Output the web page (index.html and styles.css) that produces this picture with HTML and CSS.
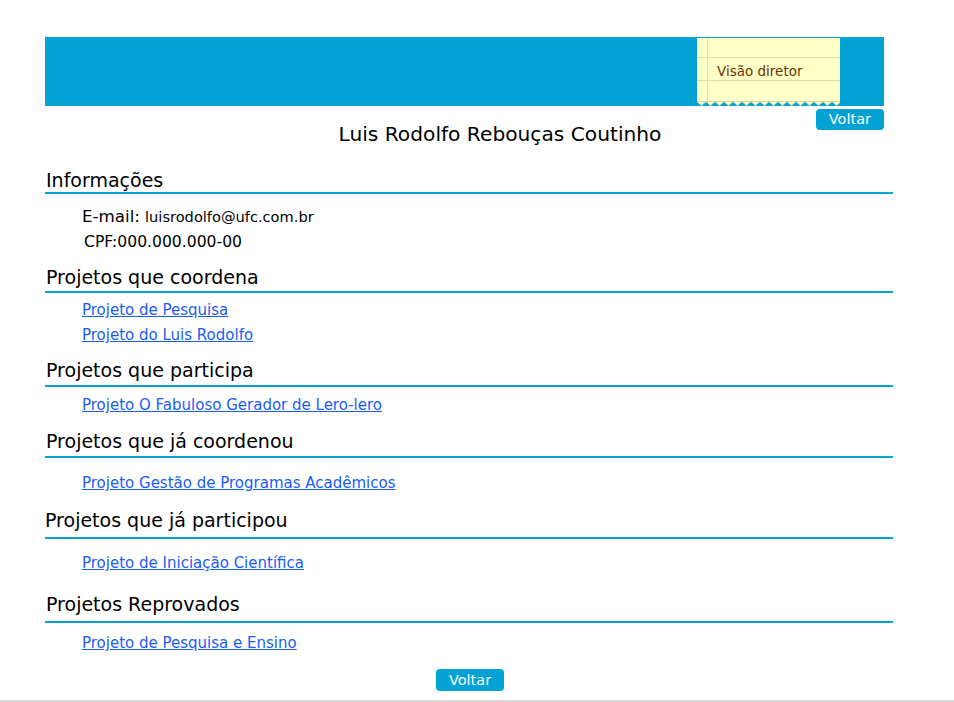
FILE: index.html
```html
<!DOCTYPE html>
<html lang="pt-BR">
<head>
<meta charset="utf-8">
<title>Luis Rodolfo Rebouças Coutinho</title>
<link rel="stylesheet" href="styles.css">
</head>
<body>
<div class="page">
  <div class="header">
    <div class="note">
      <div class="note-line"></div>
      <div class="note-line note-text">Visão diretor</div>
      <div class="note-line"></div>
      <svg class="zigzag" width="143" height="7" viewBox="0 0 143 7" preserveAspectRatio="none">
        <polyline fill="none" stroke="#c9c9b0" stroke-width="1" points="0,2.5 4.5,6.5 9,2.5 13.5,6.5 18,2.5 22.5,6.5 27,2.5 31.5,6.5 36,2.5 40.5,6.5 45,2.5 49.5,6.5 54,2.5 58.5,6.5 63,2.5 67.5,6.5 72,2.5 76.5,6.5 81,2.5 85.5,6.5 90,2.5 94.5,6.5 99,2.5 103.5,6.5 108,2.5 112.5,6.5 117,2.5 121.5,6.5 126,2.5 130.5,6.5 135,2.5 139.5,6.5 143,3.5"/>
        <polygon fill="#02a3d4" points="0,7 0,3 4.5,7 9,3 13.5,7 18,3 22.5,7 27,3 31.5,7 36,3 40.5,7 45,3 49.5,7 54,3 58.5,7 63,3 67.5,7 72,3 76.5,7 81,3 85.5,7 90,3 94.5,7 99,3 103.5,7 108,3 112.5,7 117,3 121.5,7 126,3 130.5,7 135,3 139.5,7 143,4 143,7"/>
      </svg>
    </div>
  </div>
  <div class="top-actions"><a class="btn" href="#">Voltar</a></div>
  <h1 class="title">Luis Rodolfo Rebouças Coutinho</h1>

  <h2 class="sec sec-1">Informações</h2>
  <div class="info">
    <div class="row-email"><span class="lbl">E-mail:</span> <span class="email">luisrodolfo@ufc.com.br</span></div>
    <div class="row-cpf">CPF:000.000.000-00</div>
  </div>

  <h2 class="sec sec-2">Projetos que coordena</h2>
  <ul class="links links-2">
    <li><a href="#">Projeto de Pesquisa</a></li>
    <li><a href="#">Projeto do Luis Rodolfo</a></li>
  </ul>

  <h2 class="sec sec-3">Projetos que participa</h2>
  <ul class="links links-3">
    <li><a href="#">Projeto O Fabuloso Gerador de Lero-lero</a></li>
  </ul>

  <h2 class="sec sec-4">Projetos que já coordenou</h2>
  <ul class="links links-4">
    <li><a href="#">Projeto Gestão de Programas Acadêmicos</a></li>
  </ul>

  <h2 class="sec sec-5">Projetos que já participou</h2>
  <ul class="links links-5">
    <li><a href="#">Projeto de Iniciação Científica</a></li>
  </ul>

  <h2 class="sec sec-6">Projetos Reprovados</h2>
  <ul class="links links-6">
    <li><a href="#">Projeto de Pesquisa e Ensino</a></li>
  </ul>

  <div class="bottom-actions"><a class="btn btn-bottom" href="#">Voltar</a></div>
</div>
</body>
</html>
```
FILE: styles.css
```css
html, body {
  margin: 0;
  padding: 0;
  background: #fff;
}
body {
  font-family: "Comic Sans MS", "DejaVu Sans", sans-serif;
  color: #000;
  height: 702px;
  overflow: hidden;
  position: relative;
}
body::after {
  content: "";
  position: absolute;
  left: 0;
  right: 0;
  top: 700px;
  height: 2px;
  background: #d9d9d9;
}
.page {
  width: 848px;
  margin-left: 45px;
  padding-top: 37px;
}
.header {
  width: 839px;
  height: 69px;
  background: #02a3d4;
  display: flex;
  justify-content: flex-end;
  padding-right: 44px;
  box-sizing: border-box;
}
.note {
  width: 143px;
  height: 68px;
  margin-top: 1px;
  background: #ffffc8;
  position: relative;
  background-image: linear-gradient(to right, transparent 10px, #f3d9a6 10px, #f3d9a6 11px, transparent 11px);
}
.note-line {
  height: 20px;
  border-bottom: 1px solid #e0d9a3;
}
.note-line:first-child {
  height: 19px;
}
.note-text {
  font-size: 13.5px;
  line-height: 22px;
  height: 20px;
  padding-top: 2px;
  color: #6a3300;
  padding-left: 20px;
}
.zigzag {
  position: absolute;
  left: 0;
  bottom: 0;
  display: block;
}
.top-actions {
  width: 839px;
  display: flex;
  justify-content: flex-end;
  margin-top: 3px;
}
.btn {
  display: inline-block;
  background: #02a3d4;
  color: #fff;
  text-decoration: none;
  font-size: 14.5px;
  line-height: 21px;
  height: 21px;
  padding: 0 13px;
  border-radius: 4px;
}
.btn-bottom {
  height: 22px;
  line-height: 23px;
}
.title {
  font-weight: normal;
  font-size: 20.2px;
  text-align: center;
  margin: -13px 0 0 0;
  padding-left: 62px;
  line-height: 34px;
}
.sec {
  font-weight: normal;
  font-size: 19px;
  line-height: 22px;
  margin: 0;
  padding: 0 1px 3px;
  border-bottom: 2px solid #02a3d4;
}
.sec-1 { margin-top: 18px; padding-bottom: 1px; }
.info {
  padding-left: 37px;
  padding-top: 11px;
}
.row-email {
  line-height: 22px;
}
.lbl {
  font-size: 16.7px;
}
.email {
  font-size: 14.6px;
}
.row-cpf {
  font-size: 15.6px;
  line-height: 22px;
  margin-top: 3px;
  padding-left: 2px;
}
.links {
  list-style: none;
  margin: 0;
  padding: 4px 0 0 37px;
}
.links li {
  font-size: 15px;
  line-height: 25px;
}
.links a {
  color: #1a5cf5;
}
.sec-2 { margin-top: 13px; }
.links-2 { padding-top: 5px; }
.sec-3 { margin-top: 11px; padding-bottom: 4px; }
.links-3 { padding-top: 6px; }
.sec-4 { margin-top: 12px; padding-bottom: 4px; }
.links-4 { padding-top: 13px; }
.sec-5 { margin-top: 13px; padding-left: 0; padding-bottom: 6px; }
.links-5 { padding-top: 12px; }
.sec-6 { margin-top: 17px; padding-bottom: 6px; }
.links-6 { padding-top: 8px; }
.bottom-actions {
  display: flex;
  justify-content: center;
  margin-top: 13px;
  padding-left: 2px;
}
```
